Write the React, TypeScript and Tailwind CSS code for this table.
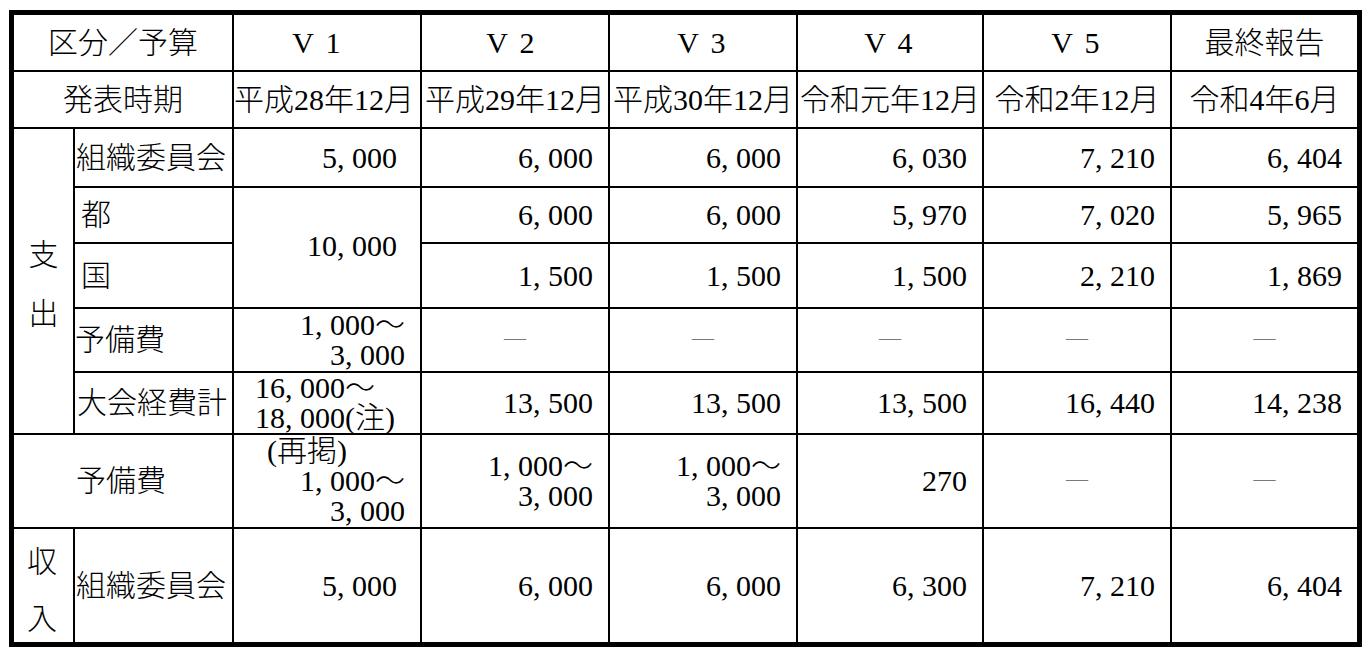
const cell = "flex bg-white items-center whitespace-nowrap";

function Num({ v, pad = "pr-[15px]" }: { v: string; pad?: string }) {
  return <div className={`${cell} justify-end ${pad}`}>{v}</div>;
}

function Dash() {
  return (
    <div className={`${cell} justify-center`}>
      <span className="-mt-[4px] text-[22px] leading-[22px] text-[#7a7a7a]">—</span>
    </div>
  );
}

function Range({ lines }: { lines: string[] }) {
  return (
    <div className={`${cell} flex-col items-end justify-center pr-[15px] leading-[30px]`}>
      {lines.map((l) => (
        <span key={l}>{l}</span>
      ))}
    </div>
  );
}

function VHead({ n, pad = "" }: { n: string; pad?: string }) {
  return (
    <div className={`${cell} justify-center ${pad}`}>
      <span className="inline-block w-[30px] text-center">V</span>
      <span className="inline-block w-[30px] text-center">{n}</span>
    </div>
  );
}

export default function App() {
  return (
    <div className="min-h-[660px] bg-white pl-[9px] pt-[10px] font-['Liberation_Serif','Noto_Sans_CJK_JP',serif] text-[30px] font-light leading-[30px] text-black">
      <div className="grid w-[1353px] grid-cols-[59px_157px_186px_186px_186px_184px_186px_185px] grid-rows-[55px_55px_57px_54px_63px_62px_60px_92px_113px] gap-[2px] border-[5px] border-black bg-black">
        {/* header */}
        <div className={`${cell} col-span-2 justify-center`}>区分／予算</div>
        <VHead n="1" pad="pr-[18px]" />
        <VHead n="2" pad="pr-[6px]" />
        <VHead n="3" />
        <VHead n="4" />
        <VHead n="5" />
        <div className={`${cell} justify-center`}>最終報告</div>

        {/* 発表時期 */}
        <div className={`${cell} col-span-2 justify-center`}>発表時期</div>
        <div className={`${cell} justify-center pr-[6px]`}>平成28年12月</div>
        <div className={`${cell} justify-center`}>平成29年12月</div>
        <div className={`${cell} justify-center`}>平成30年12月</div>
        <div className={`${cell} justify-center`}>令和元年12月</div>
        <div className={`${cell} justify-center`}>令和2年12月</div>
        <div className={`${cell} justify-center`}>令和4年6月</div>

        {/* 支出 */}
        <div className={`${cell} row-span-5 flex-col justify-center gap-[29px] pt-[6px]`}>
          <span>支</span>
          <span>出</span>
        </div>
        <div className={`${cell} pl-[1px]`}>組織委員会</div>
        <Num v="5, 000" pad="pr-[23px]" />
        <Num v="6, 000" />
        <Num v="6, 000" />
        <Num v="6, 030" />
        <Num v="7, 210" />
        <Num v="6, 404" />

        <div className={`${cell} pl-[6px]`}>都</div>
        <div className={`${cell} row-span-2 justify-end pr-[23px] pb-[4px]`}>10, 000</div>
        <Num v="6, 000" />
        <Num v="6, 000" />
        <Num v="5, 970" />
        <Num v="7, 020" />
        <Num v="5, 965" />

        <div className={`${cell} pl-[6px]`}>国</div>
        <Num v="1, 500" />
        <Num v="1, 500" />
        <Num v="1, 500" />
        <Num v="2, 210" />
        <Num v="1, 869" />

        <div className={cell}>予備費</div>
        <Range lines={["1, 000～", "3, 000"]} />
        <Dash />
        <Dash />
        <Dash />
        <Dash />
        <Dash />

        <div className={`${cell} pl-[2px]`}>大会経費計</div>
        <div className={`${cell} flex-col items-start justify-center pl-[21px] leading-[30px]`}>
          <span>16, 000～</span>
          <span>18, 000(注)</span>
        </div>
        <Num v="13, 500" />
        <Num v="13, 500" />
        <Num v="13, 500" />
        <Num v="16, 440" />
        <Num v="14, 238" />

        {/* 予備費（再掲） */}
        <div className={`${cell} col-span-2 pl-[62px]`}>予備費</div>
        <div className={`${cell} flex-col justify-center leading-[30px]`}>
          <span className="self-start pl-[33px]">(再掲)</span>
          <span className="self-end pr-[15px]">1, 000～</span>
          <span className="self-end pr-[15px]">3, 000</span>
        </div>
        <Range lines={["1, 000～", "3, 000"]} />
        <Range lines={["1, 000～", "3, 000"]} />
        <Num v="270" />
        <Dash />
        <Dash />

        {/* 収入 */}
        <div className={`${cell} flex-col justify-center gap-[27px] pt-[9px] pr-[3px]`}>
          <span>収</span>
          <span>入</span>
        </div>
        <div className={`${cell} pl-[1px]`}>組織委員会</div>
        <Num v="5, 000" pad="pr-[23px]" />
        <Num v="6, 000" />
        <Num v="6, 000" />
        <Num v="6, 300" />
        <Num v="7, 210" />
        <Num v="6, 404" />
      </div>
    </div>
  );
}
